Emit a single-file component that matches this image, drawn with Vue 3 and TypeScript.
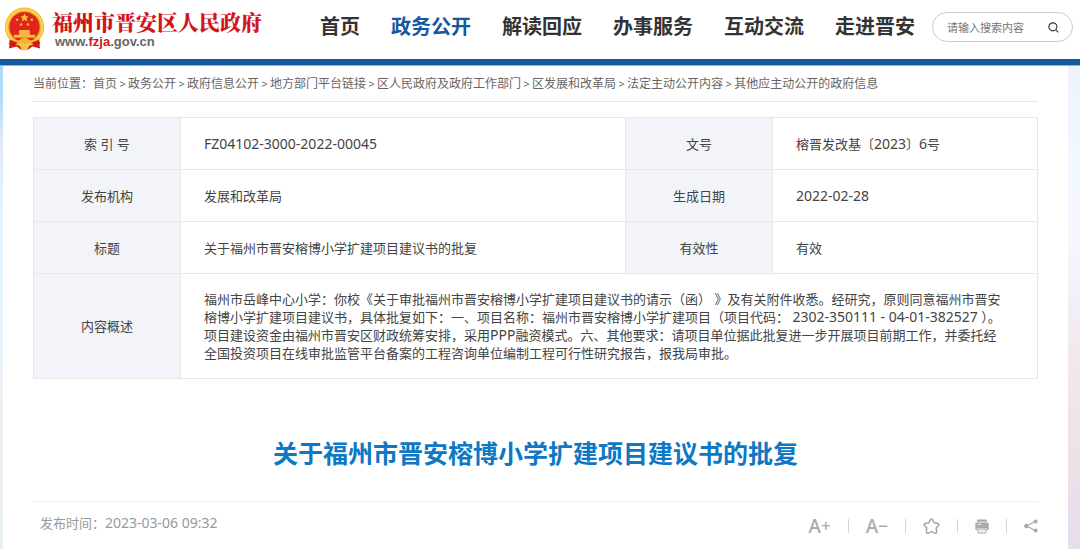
<script setup lang="ts">
import { ref } from 'vue'

const nav: string[] = ['首页', '政务公开', '解读回应', '办事服务', '互动交流', '走进晋安']
const active = ref('政务公开')
const keyword = ref('')

const crumbs: string[] = [
  '首页',
  '政务公开',
  '政府信息公开',
  '地方部门平台链接',
  '区人民政府及政府工作部门',
  '区发展和改革局',
  '法定主动公开内容',
  '其他应主动公开的政府信息',
]
</script>

<template>
  <div class="page">
    <header class="header">
      <a class="brand" href="#">
        <svg class="emblem" viewBox="0 0 42 44" aria-hidden="true">
          <path d="M7 31 L5 42 L13 40 L17 43 L25 43 L29 40 L37 42 L35 31 Z" fill="#d81e18" />
          <circle cx="21" cy="20" r="20" fill="#f0b429" />
          <circle cx="21" cy="20" r="18" fill="none" stroke="#fbd458" stroke-width="2" />
          <circle cx="21" cy="20" r="15.5" fill="#e0261c" />
          <path d="M21 6 L22.2 9 L25.4 9.1 L22.9 11.1 L23.8 14.2 L21 12.4 L18.2 14.2 L19.1 11.1 L16.6 9.1 L19.8 9 Z" fill="#fbc93d" />
          <g fill="#f6b83a">
            <circle cx="13.5" cy="12.5" r="1.3" />
            <circle cx="28.5" cy="12.5" r="1.3" />
            <circle cx="17.5" cy="17.5" r="1.3" />
            <circle cx="24.5" cy="17.5" r="1.3" />
            <path d="M16 23 h10 l1 2 h-12 z M15.500 25 h11 v3 h-11 z M10 28 h22 v3 h-22 z" />
          </g>
          <path d="M5 31 Q13 36 16 33 Q21 29 26 33 Q29 36 37 31 L35 36 Q28 39 25 37 Q21 34 17 37 Q14 39 7 36 Z" fill="#f2b632" />
          <path d="M6 33 L14 36 L10 39 L5 38 Z M36 33 L28 36 L32 39 L37 38 Z" fill="#cf1815" />
          <path d="M16 39 Q21 35 26 39 L24 43 H18 Z" fill="#f6c343" />
        </svg>
        <span class="brand-text">
          <strong class="brand-name">福州市晋安区人民政府</strong>
          <span class="brand-url">www.<em>fzja</em>.gov.cn</span>
        </span>
      </a>
      <nav class="nav">
        <a
          v-for="item in nav"
          :key="item"
          href="#"
          :class="{ active: item === active }"
          @click.prevent="active = item"
        >{{ item }}</a>
      </nav>
      <form class="search" role="search" @submit.prevent>
        <input v-model="keyword" type="text" placeholder="请输入搜索内容" aria-label="请输入搜索内容" />
        <button type="submit" aria-label="搜索">
          <svg viewBox="0 0 12 12" aria-hidden="true">
            <circle cx="5.300" cy="5.300" r="4.400" />
            <path d="M8.500 8.700 L11.200 11.300" />
          </svg>
        </button>
      </form>
    </header>

    <div class="backdrop">
      <main class="panel">
        <nav class="crumbs" aria-label="当前位置">
          <span>当前位置：</span>
          <template v-for="(c, i) in crumbs" :key="c">
            <span v-if="i > 0" class="arrow">&gt;</span>
            <a href="#">{{ c }}</a>
          </template>
        </nav>

        <table class="info">
          <colgroup>
            <col class="col-label" />
            <col class="col-wide" />
            <col class="col-label" />
            <col />
          </colgroup>
          <tbody>
            <tr>
              <th scope="row">索 引 号</th>
              <td><span class="num">FZ04102-3000-2022-00045</span></td>
              <th scope="row">文号</th>
              <td>榕晋发改基〔<span class="num">2023</span>〕<span class="num">6</span>号</td>
            </tr>
            <tr>
              <th scope="row">发布机构</th>
              <td>发展和改革局</td>
              <th scope="row">生成日期</th>
              <td><span class="num">2022-02-28</span></td>
            </tr>
            <tr>
              <th scope="row">标题</th>
              <td>关于福州市晋安榕博小学扩建项目建议书的批复</td>
              <th scope="row">有效性</th>
              <td>有效</td>
            </tr>
            <tr class="summary">
              <th scope="row">内容概述</th>
              <td colspan="3">
                福州市岳峰中心小学：你校《关于审批福州市晋安榕博小学扩建项目建议书的请示（函） 》及有关附件收悉。经研究，原则同意福州市晋安<br />榕博小学扩建项目建议书，具体批复如下：一、项目名称：福州市晋安榕博小学扩建项目（项目代码： <span class="num">2302-350111 - 04-01-382527</span> ）。<br />项目建设资金由福州市晋安区财政统筹安排，采用<span class="num">PPP</span>融资模式。六、其他要求：请项目单位据此批复进一步开展项目前期工作，并委托经<br />全国投资项目在线审批监管平台备案的工程咨询单位编制工程可行性研究报告，报我局审批。
              </td>
            </tr>
          </tbody>
        </table>

        <h1 class="title">关于福州市晋安榕博小学扩建项目建议书的批复</h1>

        <div class="meta">
          <span class="time">发布时间：<time class="num" datetime="2023-03-06T09:32">2023-03-06 09:32</time></span>
          <div class="tools">
            <button type="button" aria-label="放大字号">A<span>+</span></button>
            <i></i>
            <button type="button" aria-label="缩小字号">A<span>−</span></button>
            <i></i>
            <button type="button" aria-label="收藏">
              <svg class="star" viewBox="0 0 17 17" aria-hidden="true">
                <path d="M7.300 1.900 Q8.500 0.300 9.700 1.900 L11.200 4.800 L14.700 5.400 Q16.600 6 15.400 7.600 L13.200 10 L13.700 13.600 Q13.700 15.800 11.700 15.100 L8.500 13.600 L5.300 15.100 Q3.300 15.800 3.300 13.600 L3.800 10 L1.600 7.600 Q0.400 6 2.300 5.400 L5.800 4.800 Z" />
              </svg>
            </button>
            <i></i>
            <button type="button" aria-label="打印">
              <svg class="printer" viewBox="0 0 14 15" aria-hidden="true">
                <path d="M3 0.500 H11 Q12 0.500 12 1.500 V2.800 H2 V1.500 Q2 0.500 3 0.500 Z" />
                <path d="M1.500 3.500 H12.500 Q13.700 3.500 13.700 4.700 V10 Q13.700 11 12.500 11 H12 V9.200 H2 V11 H1.500 Q0.300 11 0.300 10 V4.700 Q0.300 3.500 1.500 3.500 Z" />
                <path class="sheet" d="M2.800 10 H11.200 V13 Q11.200 14 10.200 14 H3.800 Q2.800 14 2.800 13 Z" />
                <path class="light" d="M2.500 5.500 H6" />
              </svg>
            </button>
            <i></i>
            <button type="button" aria-label="分享">
              <svg class="share" viewBox="0 0 14 14" aria-hidden="true">
                <path d="M11.500 2.500 L2.500 7 L11.500 11.500" />
                <circle cx="11.600" cy="2.500" r="2" />
                <circle cx="2.300" cy="7" r="2.200" />
                <circle cx="11.600" cy="11.500" r="2" />
              </svg>
            </button>
          </div>
        </div>
      </main>
    </div>
  </div>
</template>

<style>
body {
  margin: 0;
  background: #fff;
}
</style>

<style scoped>
.page {
  display: flex;
  flex-direction: column;
  min-height: 100vh;
  font-family: 'Noto Sans', 'Noto Sans CJK SC', sans-serif;
  font-size: 13px;
  color: #444;
}
a {
  color: inherit;
  text-decoration: none;
}
button {
  padding: 0;
  border: 0;
  background: none;
  color: inherit;
  font: inherit;
  cursor: pointer;
}
svg {
  display: block;
}
.header {
  display: flex;
  align-items: center;
  box-sizing: border-box;
  height: 65px;
  padding: 0 7px 5px 4px;
  border-bottom: 6px solid #1557a0;
  box-shadow: 0 1px #8fb0d8;
  flex: none;
  position: relative;
}
.brand {
  display: flex;
  align-items: center;
  gap: 7px;
}
.emblem {
  width: 41px;
  height: 44px;
  margin-top: 4px;
}
.brand-text {
  display: flex;
  flex-direction: column;
  margin-top: 4px;
}
.brand-name {
  font-size: 21px;
  line-height: 26px;
  font-weight: 900;
  color: #d0161b;
  font-family: 'Noto Serif CJK SC', 'Noto Sans CJK SC', serif;
}
.brand-url {
  padding-left: 3px;
  font: bold 13px/16px 'Liberation Sans', sans-serif;
  color: #666;
}
.brand-url em {
  font-style: normal;
  color: #d0161b;
}
.nav {
  display: flex;
  gap: 31px;
  margin-left: auto;
  font-size: 20px;
  line-height: 30px;
  font-weight: 700;
  color: #333;
  white-space: nowrap;
}
.nav .active {
  color: #1557a0;
}
.search {
  display: flex;
  align-items: center;
  box-sizing: border-box;
  width: 141px;
  height: 30px;
  margin-left: 17px;
  padding: 0 13px 0 14px;
  border: 1px solid #ccc;
  border-radius: 15px;
}
.search input {
  flex: 1;
  min-width: 0;
  padding: 0;
  border: 0;
  outline: 0;
  background: none;
  font: inherit;
  font-size: 11px;
  color: #444;
}
.search input::placeholder {
  color: #757575;
  opacity: 1;
}
.search svg {
  width: 11px;
  height: 11px;
  fill: none;
  stroke: #333;
  stroke-width: 1.2;
}
.backdrop {
  flex: 1;
  display: flex;
  padding: 0 12px 0 3px;
  background:
    linear-gradient(#a9d8fb, #b5dcfb 8%, #e4e9f7 16%, #e0f3ff 30%, #eaf3fa 60%, #eeeeee 76%, #e8f1f2) left / 3px 100% no-repeat,
    linear-gradient(#eef2fd, #f3f7fe 20%, #f5f9fe 35%, #f2eef5 50%, #f3e6ee 62%, #eedfe9 85%, #e5deee) right / 12px 100% no-repeat;
}
.panel {
  flex: 1;
  min-width: 0;
  padding: 0 30px;
  background: #fff;
}
.crumbs {
  display: flex;
  align-items: center;
  height: 36px;
  border-bottom: 1px solid #e6e6e6;
  font-size: 12px;
  color: #666;
  white-space: nowrap;
}
.arrow {
  width: 11px;
  text-align: center;
  font-size: 11px;
}
.info {
  width: 100%;
  margin-top: 15px;
  border-collapse: collapse;
  table-layout: fixed;
}
.col-label {
  width: 147px;
}
.col-wide {
  width: 445px;
}
.info th,
.info td {
  box-sizing: border-box;
  height: 52px;
  padding: 0 23px;
  border: 1px solid #e8e8e8;
  line-height: 18px;
  text-align: left;
}
.info th {
  padding: 0;
  background: #f3f4f9;
  font-weight: 400;
  text-align: center;
}
.info .summary th,
.info .summary td {
  height: 105px;
}
.info .summary td {
  white-space: nowrap;
}
.num {
  font-size: 14px;
}
.title {
  margin: 0;
  padding: 56px 0 29px;
  font-size: 25px;
  line-height: 37px;
  font-weight: 700;
  text-align: center;
  color: #0e78c4;
}
.meta {
  display: flex;
  justify-content: space-between;
  padding: 11px 0 0 7px;
  border-top: 1px solid #eee;
  color: #999;
}
.time {
  line-height: 20px;
}
.tools {
  display: flex;
  align-items: center;
  gap: 17px;
  height: 26px;
  color: #aaa;
}
.tools i {
  width: 1px;
  height: 14px;
  background: #d5d5dc;
}
.tools button {
  display: flex;
  align-items: center;
  font-size: 19px;
  line-height: 26px;
  font-weight: 500;
}
.tools button span {
  font-size: 17px;
}
.star {
  width: 17px;
  height: 17px;
  fill: none;
  stroke: #aaa;
  stroke-width: 1.6;
}
.printer {
  width: 14px;
  height: 15px;
  fill: #aaa;
}
.printer .sheet {
  fill: #eee;
  stroke: #aaa;
}
.printer .light {
  stroke: #eee;
}
.share {
  width: 14px;
  height: 14px;
  fill: #aaa;
}
.share path {
  fill: none;
  stroke: #aaa;
  stroke-width: 1.3;
}
</style>
